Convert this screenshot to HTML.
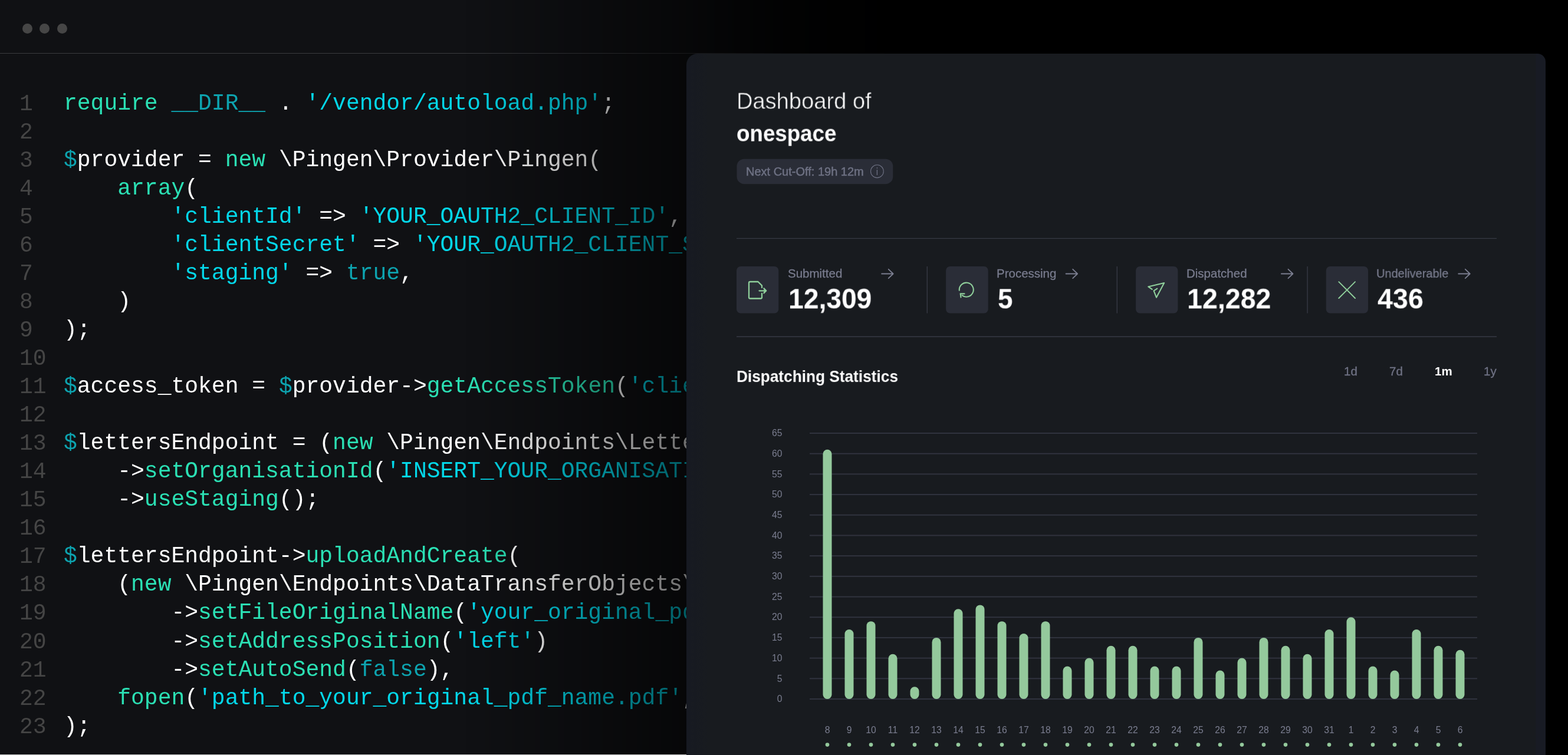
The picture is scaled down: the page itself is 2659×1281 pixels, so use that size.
<!DOCTYPE html>
<html lang="en">
<head>
<meta charset="utf-8">
<title>Pingen Dashboard</title>
<style>
html,body{margin:0;padding:0;background:#000;}
body{width:2659px;height:1281px;position:relative;overflow:hidden;font-family:"Liberation Sans",sans-serif;}
.t,.ln,.chart{will-change:transform;}
#editor{position:absolute;left:0;top:0;width:1600px;height:1280px;background:#101114;overflow:hidden;}
#tline{position:absolute;left:0;top:90px;width:1500px;height:1px;background:#3a3b3f;}
.dot{position:absolute;top:40px;width:17px;height:17px;border-radius:50%;background:#464646;}
.ln{position:absolute;left:0;height:0;width:1500px;white-space:pre;font-family:"Liberation Mono",monospace;font-size:38.00px;line-height:0;}
.ln span{line-height:0;}
.ln{transform:translateY(-0.2666em);}
.no{position:absolute;left:33.0px;top:-0.7px;color:#454545;}
.cd{position:absolute;left:108.0px;top:-2.3px;color:#fff;}
.w{color:#ffffff}.g{color:#2be0b4}.c{color:#04d7e9}.d{color:#0da3af}
#fade{position:absolute;left:0;top:0;width:1600px;height:1280px;background:linear-gradient(to right,rgba(0,0,0,0) 790px,rgba(0,0,0,0.57) 1164px,rgba(0,0,0,0.86) 1330px,rgba(0,0,0,1) 1560px);}
#bline{position:absolute;left:0;top:1280px;width:1164px;height:1px;background:#c9c9c9;}
#panel{position:absolute;left:1164px;top:91px;width:1457px;height:1300px;border-radius:19px 14px 0 0;background:linear-gradient(to right,#171a22 0px,#181b1f 40px,#181b1f 1440px,#181b24 1441px);}
.t{position:absolute;white-space:nowrap;line-height:0;height:0;transform:translateY(-0.3466em) scaleX(var(--sx,1));transform-origin:0 0;}
.chart{position:absolute;left:0;top:0;}
.chart .ax{font-family:"Liberation Sans",sans-serif;font-size:15.7px;fill:#7a7d8f;}
svg.ic{position:absolute;left:0;top:0;overflow:visible;}
</style>
</head>
<body>
<div id="editor">
  <div class="dot" style="left:37.5px"></div><div class="dot" style="left:67px"></div><div class="dot" style="left:96.5px"></div>
  <div id="tline"></div>
<div class="ln" style="top:187.75px"><span class="no">1</span><span class="cd"><span class="g">require </span><span class="d">__DIR__</span><span class="w"> . </span><span class="c">'/vendor/autoload.php'</span><span class="w">;</span></span></div>
<div class="ln" style="top:235.79px"><span class="no">2</span><span class="cd"></span></div>
<div class="ln" style="top:283.83px"><span class="no">3</span><span class="cd"><span class="d">$</span><span class="w">provider = </span><span class="g">new</span><span class="w"> \Pingen\Provider\Pingen(</span></span></div>
<div class="ln" style="top:331.87px"><span class="no">4</span><span class="cd"><span class="w">    </span><span class="g">array</span><span class="w">(</span></span></div>
<div class="ln" style="top:379.91px"><span class="no">5</span><span class="cd"><span class="w">        </span><span class="c">'clientId'</span><span class="w"> =&gt; </span><span class="c">'YOUR_OAUTH2_CLIENT_ID'</span><span class="w">,</span></span></div>
<div class="ln" style="top:427.95px"><span class="no">6</span><span class="cd"><span class="w">        </span><span class="c">'clientSecret'</span><span class="w"> =&gt; </span><span class="c">'YOUR_OAUTH2_CLIENT_SECRET'</span><span class="w">,</span></span></div>
<div class="ln" style="top:475.99px"><span class="no">7</span><span class="cd"><span class="w">        </span><span class="c">'staging'</span><span class="w"> =&gt; </span><span class="d">true</span><span class="w">,</span></span></div>
<div class="ln" style="top:524.03px"><span class="no">8</span><span class="cd"><span class="w">    )</span></span></div>
<div class="ln" style="top:572.07px"><span class="no">9</span><span class="cd"><span class="w">);</span></span></div>
<div class="ln" style="top:620.11px"><span class="no">10</span><span class="cd"></span></div>
<div class="ln" style="top:668.15px"><span class="no">11</span><span class="cd"><span class="d">$</span><span class="w">access_token = </span><span class="d">$</span><span class="w">provider-&gt;</span><span class="g">getAccessToken</span><span class="w">(</span><span class="c">'client_credentials'</span><span class="w">);</span></span></div>
<div class="ln" style="top:716.19px"><span class="no">12</span><span class="cd"></span></div>
<div class="ln" style="top:764.23px"><span class="no">13</span><span class="cd"><span class="d">$</span><span class="w">lettersEndpoint = (</span><span class="g">new</span><span class="w"> \Pingen\Endpoints\LettersEndpoint(</span><span class="d">$</span><span class="w">access_token))</span></span></div>
<div class="ln" style="top:812.27px"><span class="no">14</span><span class="cd"><span class="w">    -&gt;</span><span class="g">setOrganisationId</span><span class="w">(</span><span class="c">'INSERT_YOUR_ORGANISATION_UUID_HERE'</span><span class="w">)</span></span></div>
<div class="ln" style="top:860.31px"><span class="no">15</span><span class="cd"><span class="w">    -&gt;</span><span class="g">useStaging</span><span class="w">();</span></span></div>
<div class="ln" style="top:908.35px"><span class="no">16</span><span class="cd"></span></div>
<div class="ln" style="top:956.39px"><span class="no">17</span><span class="cd"><span class="d">$</span><span class="w">lettersEndpoint-&gt;</span><span class="g">uploadAndCreate</span><span class="w">(</span></span></div>
<div class="ln" style="top:1004.43px"><span class="no">18</span><span class="cd"><span class="w">    (</span><span class="g">new</span><span class="w"> \Pingen\Endpoints\DataTransferObjects\Letter\LetterCreateAttributes())</span></span></div>
<div class="ln" style="top:1052.47px"><span class="no">19</span><span class="cd"><span class="w">        -&gt;</span><span class="g">setFileOriginalName</span><span class="w">(</span><span class="c">'your_original_pdf_name.pdf'</span><span class="w">)</span></span></div>
<div class="ln" style="top:1100.51px"><span class="no">20</span><span class="cd"><span class="w">        -&gt;</span><span class="g">setAddressPosition</span><span class="w">(</span><span class="c">'left'</span><span class="w">)</span></span></div>
<div class="ln" style="top:1148.55px"><span class="no">21</span><span class="cd"><span class="w">        -&gt;</span><span class="g">setAutoSend</span><span class="w">(</span><span class="d">false</span><span class="w">),</span></span></div>
<div class="ln" style="top:1196.59px"><span class="no">22</span><span class="cd"><span class="w">    </span><span class="g">fopen</span><span class="w">(</span><span class="c">'path_to_your_original_pdf_name.pdf'</span><span class="w">, </span><span class="c">'r'</span><span class="w">)</span></span></div>
<div class="ln" style="top:1244.63px"><span class="no">23</span><span class="cd"><span class="w">);</span></span></div>
  <div id="fade"></div>
</div>
<div id="bline"></div>
<div id="panel"></div>

<svg class="ic" width="2659" height="1281" viewBox="0 0 2659 1281">
  <rect x="1249.5" y="269.65" width="264.8" height="42.5" rx="12.5" fill="#2a2d37"/>
  <rect x="1249" y="403.9" width="1289" height="1.3" fill="#363944"/>
  <rect x="1249" y="570.5" width="1289" height="1.5" fill="#363944"/>
  <g fill="#2a2d37">
    <rect x="1249" y="451.9" width="71.3" height="79.7" rx="7"/>
    <rect x="1604.1" y="451.9" width="71.6" height="79.7" rx="7"/>
    <rect x="1926.1" y="451.9" width="71.3" height="79.7" rx="7"/>
    <rect x="2248.7" y="451.9" width="71.3" height="79.7" rx="7"/>
  </g>
  <g fill="#363944">
    <rect x="1571.6" y="452" width="1.4" height="79.5"/>
    <rect x="1893.6" y="452" width="1.4" height="79.5"/>
    <rect x="2216.4" y="452" width="1.4" height="79.5"/>
  </g>
</svg>
<div class="t" id="t1" style="-webkit-text-stroke:0.6px #181b1f;--sx:0.987;left:1249px;top:184.8px;font-size:38.6px;color:#fff;">Dashboard of</div>
<div class="t" id="t2" style="--sx:0.952;left:1248.5px;top:239.6px;font-size:38.6px;font-weight:bold;color:#fff;">onespace</div>
<div class="t" id="t3" style="-webkit-text-stroke:0.5px #6e7183;left:1264.8px;top:297.6px;font-size:20px;color:#6e7183;">Next Cut-Off: 19h 12m</div>



<div class="t lb" id="l1" style="left:1335.5px;top:471px;font-size:20.5px;color:#787b8d;-webkit-text-stroke:0.3px #787b8d;">Submitted</div>
<div class="t lb" id="l2" style="left:1689.5px;top:471px;font-size:20.5px;color:#787b8d;-webkit-text-stroke:0.3px #787b8d;">Processing</div>
<div class="t lb" id="l3" style="left:2011.5px;top:471px;font-size:20.5px;color:#787b8d;-webkit-text-stroke:0.3px #787b8d;">Dispatched</div>
<div class="t lb" id="l4" style="--sx:0.975;left:2334px;top:471px;font-size:20.5px;color:#787b8d;-webkit-text-stroke:0.3px #787b8d;">Undeliverable</div>

<div class="t nm" id="n1" style="--sx:0.9625;left:1336.6px;top:524px;font-size:48px;font-weight:bold;color:#fff;">12,309</div>
<div class="t nm" id="n2" style="--sx:0.95;left:1691.5px;top:524px;font-size:48px;font-weight:bold;color:#fff;">5</div>
<div class="t nm" id="n3" style="--sx:0.97;left:2013.2px;top:524px;font-size:48px;font-weight:bold;color:#fff;">12,282</div>
<div class="t nm" id="n4" style="--sx:0.97;left:2336.4px;top:524px;font-size:48px;font-weight:bold;color:#fff;">436</div>

<div class="t" id="t4" style="--sx:0.92;left:1248.7px;top:647.7px;font-size:28.5px;font-weight:bold;color:#fff;">Dispatching Statistics</div>
<div class="t" id="r1" style="-webkit-text-stroke:0.35px #6e7183;left:2279px;top:637px;font-size:20.5px;color:#6e7183;">1d</div>
<div class="t" id="r2" style="-webkit-text-stroke:0.35px #6e7183;left:2356px;top:637px;font-size:20.5px;color:#6e7183;">7d</div>
<div class="t" id="r3" style="left:2432.5px;top:637px;font-size:20.5px;font-weight:bold;color:#fff;">1m</div>
<div class="t" id="r4" style="-webkit-text-stroke:0.35px #6e7183;left:2516px;top:637px;font-size:20.5px;color:#6e7183;">1y</div>

<svg class="chart" width="2659" height="1281" viewBox="0 0 2659 1281">
<rect x="1373" y="1185.00" width="1132" height="2" fill="#30333e"/>
<text x="1326.5" y="1191.20" text-anchor="end" class="ax">0</text>
<rect x="1373" y="1150.31" width="1132" height="2" fill="#30333e"/>
<text x="1326.5" y="1156.51" text-anchor="end" class="ax">5</text>
<rect x="1373" y="1115.62" width="1132" height="2" fill="#30333e"/>
<text x="1326.5" y="1121.82" text-anchor="end" class="ax">10</text>
<rect x="1373" y="1080.92" width="1132" height="2" fill="#30333e"/>
<text x="1326.5" y="1087.12" text-anchor="end" class="ax">15</text>
<rect x="1373" y="1046.23" width="1132" height="2" fill="#30333e"/>
<text x="1326.5" y="1052.43" text-anchor="end" class="ax">20</text>
<rect x="1373" y="1011.54" width="1132" height="2" fill="#30333e"/>
<text x="1326.5" y="1017.74" text-anchor="end" class="ax">25</text>
<rect x="1373" y="976.85" width="1132" height="2" fill="#30333e"/>
<text x="1326.5" y="983.05" text-anchor="end" class="ax">30</text>
<rect x="1373" y="942.15" width="1132" height="2" fill="#30333e"/>
<text x="1326.5" y="948.35" text-anchor="end" class="ax">35</text>
<rect x="1373" y="907.46" width="1132" height="2" fill="#30333e"/>
<text x="1326.5" y="913.66" text-anchor="end" class="ax">40</text>
<rect x="1373" y="872.77" width="1132" height="2" fill="#30333e"/>
<text x="1326.5" y="878.97" text-anchor="end" class="ax">45</text>
<rect x="1373" y="838.08" width="1132" height="2" fill="#30333e"/>
<text x="1326.5" y="844.28" text-anchor="end" class="ax">50</text>
<rect x="1373" y="803.38" width="1132" height="2" fill="#30333e"/>
<text x="1326.5" y="809.58" text-anchor="end" class="ax">55</text>
<rect x="1373" y="768.69" width="1132" height="2" fill="#30333e"/>
<text x="1326.5" y="774.89" text-anchor="end" class="ax">60</text>
<rect x="1373" y="734.00" width="1132" height="2" fill="#30333e"/>
<text x="1326.5" y="740.20" text-anchor="end" class="ax">65</text>
<rect x="1395.50" y="762.75" width="15.0" height="423.25" rx="7.50" fill="#94c99c"/>
<text x="1403.00" y="1243.6" text-anchor="middle" class="ax">8</text>
<circle cx="1403.00" cy="1263.6" r="3.3" fill="#94c99c"/>
<rect x="1432.50" y="1068.05" width="15.0" height="117.95" rx="7.50" fill="#94c99c"/>
<text x="1440.00" y="1243.6" text-anchor="middle" class="ax">9</text>
<circle cx="1440.00" cy="1263.6" r="3.3" fill="#94c99c"/>
<rect x="1469.50" y="1054.17" width="15.0" height="131.83" rx="7.50" fill="#94c99c"/>
<text x="1477.00" y="1243.6" text-anchor="middle" class="ax">10</text>
<circle cx="1477.00" cy="1263.6" r="3.3" fill="#94c99c"/>
<rect x="1506.50" y="1109.68" width="15.0" height="76.32" rx="7.50" fill="#94c99c"/>
<text x="1514.00" y="1243.6" text-anchor="middle" class="ax">11</text>
<circle cx="1514.00" cy="1263.6" r="3.3" fill="#94c99c"/>
<rect x="1543.50" y="1165.18" width="15.0" height="20.82" rx="7.50" fill="#94c99c"/>
<text x="1551.00" y="1243.6" text-anchor="middle" class="ax">12</text>
<circle cx="1551.00" cy="1263.6" r="3.3" fill="#94c99c"/>
<rect x="1580.50" y="1081.92" width="15.0" height="104.08" rx="7.50" fill="#94c99c"/>
<text x="1588.00" y="1243.6" text-anchor="middle" class="ax">13</text>
<circle cx="1588.00" cy="1263.6" r="3.3" fill="#94c99c"/>
<rect x="1617.50" y="1033.35" width="15.0" height="152.65" rx="7.50" fill="#94c99c"/>
<text x="1625.00" y="1243.6" text-anchor="middle" class="ax">14</text>
<circle cx="1625.00" cy="1263.6" r="3.3" fill="#94c99c"/>
<rect x="1654.50" y="1026.42" width="15.0" height="159.58" rx="7.50" fill="#94c99c"/>
<text x="1662.00" y="1243.6" text-anchor="middle" class="ax">15</text>
<circle cx="1662.00" cy="1263.6" r="3.3" fill="#94c99c"/>
<rect x="1691.50" y="1054.17" width="15.0" height="131.83" rx="7.50" fill="#94c99c"/>
<text x="1699.00" y="1243.6" text-anchor="middle" class="ax">16</text>
<circle cx="1699.00" cy="1263.6" r="3.3" fill="#94c99c"/>
<rect x="1728.50" y="1074.98" width="15.0" height="111.02" rx="7.50" fill="#94c99c"/>
<text x="1736.00" y="1243.6" text-anchor="middle" class="ax">17</text>
<circle cx="1736.00" cy="1263.6" r="3.3" fill="#94c99c"/>
<rect x="1765.50" y="1054.17" width="15.0" height="131.83" rx="7.50" fill="#94c99c"/>
<text x="1773.00" y="1243.6" text-anchor="middle" class="ax">18</text>
<circle cx="1773.00" cy="1263.6" r="3.3" fill="#94c99c"/>
<rect x="1802.50" y="1130.49" width="15.0" height="55.51" rx="7.50" fill="#94c99c"/>
<text x="1810.00" y="1243.6" text-anchor="middle" class="ax">19</text>
<circle cx="1810.00" cy="1263.6" r="3.3" fill="#94c99c"/>
<rect x="1839.50" y="1116.62" width="15.0" height="69.38" rx="7.50" fill="#94c99c"/>
<text x="1847.00" y="1243.6" text-anchor="middle" class="ax">20</text>
<circle cx="1847.00" cy="1263.6" r="3.3" fill="#94c99c"/>
<rect x="1876.50" y="1095.80" width="15.0" height="90.20" rx="7.50" fill="#94c99c"/>
<text x="1884.00" y="1243.6" text-anchor="middle" class="ax">21</text>
<circle cx="1884.00" cy="1263.6" r="3.3" fill="#94c99c"/>
<rect x="1913.50" y="1095.80" width="15.0" height="90.20" rx="7.50" fill="#94c99c"/>
<text x="1921.00" y="1243.6" text-anchor="middle" class="ax">22</text>
<circle cx="1921.00" cy="1263.6" r="3.3" fill="#94c99c"/>
<rect x="1950.50" y="1130.49" width="15.0" height="55.51" rx="7.50" fill="#94c99c"/>
<text x="1958.00" y="1243.6" text-anchor="middle" class="ax">23</text>
<circle cx="1958.00" cy="1263.6" r="3.3" fill="#94c99c"/>
<rect x="1987.50" y="1130.49" width="15.0" height="55.51" rx="7.50" fill="#94c99c"/>
<text x="1995.00" y="1243.6" text-anchor="middle" class="ax">24</text>
<circle cx="1995.00" cy="1263.6" r="3.3" fill="#94c99c"/>
<rect x="2024.50" y="1081.92" width="15.0" height="104.08" rx="7.50" fill="#94c99c"/>
<text x="2032.00" y="1243.6" text-anchor="middle" class="ax">25</text>
<circle cx="2032.00" cy="1263.6" r="3.3" fill="#94c99c"/>
<rect x="2061.50" y="1137.43" width="15.0" height="48.57" rx="7.50" fill="#94c99c"/>
<text x="2069.00" y="1243.6" text-anchor="middle" class="ax">26</text>
<circle cx="2069.00" cy="1263.6" r="3.3" fill="#94c99c"/>
<rect x="2098.50" y="1116.62" width="15.0" height="69.38" rx="7.50" fill="#94c99c"/>
<text x="2106.00" y="1243.6" text-anchor="middle" class="ax">27</text>
<circle cx="2106.00" cy="1263.6" r="3.3" fill="#94c99c"/>
<rect x="2135.50" y="1081.92" width="15.0" height="104.08" rx="7.50" fill="#94c99c"/>
<text x="2143.00" y="1243.6" text-anchor="middle" class="ax">28</text>
<circle cx="2143.00" cy="1263.6" r="3.3" fill="#94c99c"/>
<rect x="2172.50" y="1095.80" width="15.0" height="90.20" rx="7.50" fill="#94c99c"/>
<text x="2180.00" y="1243.6" text-anchor="middle" class="ax">29</text>
<circle cx="2180.00" cy="1263.6" r="3.3" fill="#94c99c"/>
<rect x="2209.50" y="1109.68" width="15.0" height="76.32" rx="7.50" fill="#94c99c"/>
<text x="2217.00" y="1243.6" text-anchor="middle" class="ax">30</text>
<circle cx="2217.00" cy="1263.6" r="3.3" fill="#94c99c"/>
<rect x="2246.50" y="1068.05" width="15.0" height="117.95" rx="7.50" fill="#94c99c"/>
<text x="2254.00" y="1243.6" text-anchor="middle" class="ax">31</text>
<circle cx="2254.00" cy="1263.6" r="3.3" fill="#94c99c"/>
<rect x="2283.50" y="1047.23" width="15.0" height="138.77" rx="7.50" fill="#94c99c"/>
<text x="2291.00" y="1243.6" text-anchor="middle" class="ax">1</text>
<circle cx="2291.00" cy="1263.6" r="3.3" fill="#94c99c"/>
<rect x="2320.50" y="1130.49" width="15.0" height="55.51" rx="7.50" fill="#94c99c"/>
<text x="2328.00" y="1243.6" text-anchor="middle" class="ax">2</text>
<circle cx="2328.00" cy="1263.6" r="3.3" fill="#94c99c"/>
<rect x="2357.50" y="1137.43" width="15.0" height="48.57" rx="7.50" fill="#94c99c"/>
<text x="2365.00" y="1243.6" text-anchor="middle" class="ax">3</text>
<circle cx="2365.00" cy="1263.6" r="3.3" fill="#94c99c"/>
<rect x="2394.50" y="1068.05" width="15.0" height="117.95" rx="7.50" fill="#94c99c"/>
<text x="2402.00" y="1243.6" text-anchor="middle" class="ax">4</text>
<circle cx="2402.00" cy="1263.6" r="3.3" fill="#94c99c"/>
<rect x="2431.50" y="1095.80" width="15.0" height="90.20" rx="7.50" fill="#94c99c"/>
<text x="2439.00" y="1243.6" text-anchor="middle" class="ax">5</text>
<circle cx="2439.00" cy="1263.6" r="3.3" fill="#94c99c"/>
<rect x="2468.50" y="1102.74" width="15.0" height="83.26" rx="7.50" fill="#94c99c"/>
<text x="2476.00" y="1243.6" text-anchor="middle" class="ax">6</text>
<circle cx="2476.00" cy="1263.6" r="3.3" fill="#94c99c"/>
</svg>

<svg class="ic" width="2659" height="1281" viewBox="0 0 2659 1281" fill="none" stroke-linecap="round" stroke-linejoin="round">
  <!-- info icon -->
  <circle cx="1487.4" cy="290.7" r="10.9" stroke="#6e7183" stroke-width="1.1"/>
  <path d="M1487.4 288.5V296.5M1487.4 284.6V285.4" stroke="#6e7183" stroke-width="1.3"/>
  <!-- arrows -->
  <g stroke="#7b7e90" stroke-width="1.8">
    <path d="M1495.1 464.5H1514.6M1506.7 456.8L1514.7 464.5L1506.7 472.2"/>
    <path d="M1807.6 464.5H1827.1M1819.2 456.8L1827.2 464.5L1819.2 472.2"/>
    <path d="M2172.9 464.5H2192.4M2184.5 456.8L2192.5 464.5L2184.5 472.2"/>
    <path d="M2473.2 464.5H2492.7M2484.8 456.8L2492.8 464.5L2484.8 472.2"/>
  </g>
  <!-- submitted icon -->
  <g stroke="#8fcf9b" stroke-width="2.3">
    <path d="M1292 488V484.5L1285.5 478H1272Q1270 478 1270 480V504.5Q1270 506.5 1272 506.5H1290Q1292 506.5 1292 504.5V498"/>
    <path d="M1287.5 493.3H1299"/>
    <path d="M1295.4 489.3L1299.2 493.3L1295.4 497.3" fill="#8fcf9b"/>
  </g>
  <!-- processing icon -->
  <g stroke="#8fcf9b" stroke-width="2.1">
    <path d="M1626.8 492.6A12 12 0 1 1 1631.5 501.2"/>
    <path d="M1629.5 504.5L1628.6 498.2L1635.5 498.4" />
  </g>
  <!-- dispatched icon -->
  <g stroke="#8fcf9b" stroke-width="2.1">
    <path d="M1953.7 490.8L1947.2 486.4L1974.2 480.1L1961 504.7L1956.6 493.3L1962.3 489.7"/>
  </g>
  <!-- undeliverable icon -->
  <g stroke="#8fcf9b" stroke-width="1.9">
    <path d="M2270.3 478.2L2298 506M2298 478.2L2270.3 506"/>
  </g>
</svg>
</body>
</html>
